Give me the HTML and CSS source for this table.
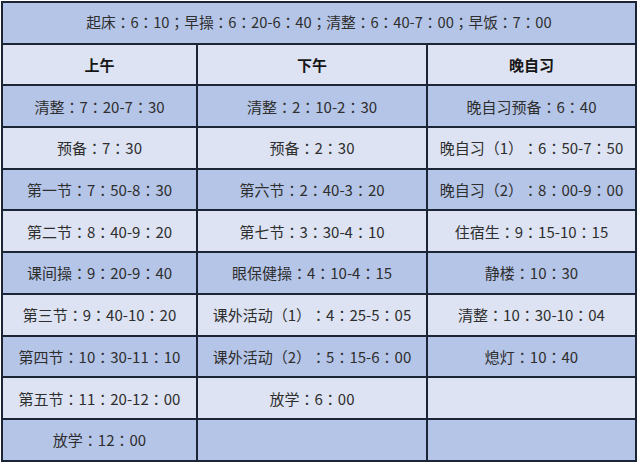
FILE: index.html
```html
<!DOCTYPE html>
<html lang="zh-CN">
<head>
<meta charset="utf-8">
<title>作息时间表</title>
<link rel="stylesheet" href="styles.css">
</head>
<body>
<div class="schedule" lang="zh-TW">
  <div class="cell title blue">起床：6：10；早操：6：20-6：40；清整：6：40-7：00；早饭：7：00</div>
  <div class="cell head light">上午</div>
  <div class="cell head light">下午</div>
  <div class="cell head light">晚自习</div>

  <div class="cell blue">清整：7：20-7：30</div>
  <div class="cell blue">清整：2：10-2：30</div>
  <div class="cell blue">晚自习预备：6：40</div>

  <div class="cell light">预备：7：30</div>
  <div class="cell light">预备：2：30</div>
  <div class="cell light">晚自习（1）：6：50-7：50</div>

  <div class="cell blue">第一节：7：50-8：30</div>
  <div class="cell blue">第六节：2：40-3：20</div>
  <div class="cell blue">晚自习（2）：8：00-9：00</div>

  <div class="cell light">第二节：8：40-9：20</div>
  <div class="cell light">第七节：3：30-4：10</div>
  <div class="cell light">住宿生：9：15-10：15</div>

  <div class="cell blue">课间操：9：20-9：40</div>
  <div class="cell blue">眼保健操：4：10-4：15</div>
  <div class="cell blue">静楼：10：30</div>

  <div class="cell light">第三节：9：40-10：20</div>
  <div class="cell light">课外活动（1）：4：25-5：05</div>
  <div class="cell light">清整：10：30-10：04</div>

  <div class="cell blue">第四节：10：30-11：10</div>
  <div class="cell blue">课外活动（2）：5：15-6：00</div>
  <div class="cell blue">熄灯：10：40</div>

  <div class="cell light">第五节：11：20-12：00</div>
  <div class="cell light">放学：6：00</div>
  <div class="cell light"></div>

  <div class="cell blue">放学：12：00</div>
  <div class="cell blue"></div>
  <div class="cell blue"></div>
</div>
</body>
</html>
```

FILE: styles.css
```css
html, body {
  margin: 0;
  padding: 0;
  background: #ffffff;
}

body {
  font-family: "Noto Sans CJK TC", "Noto Sans CJK SC", "Noto Sans", sans-serif;
  color: #2e2e2e;
}

.schedule {
  margin: 1px 0 0 1px;
  width: 636px;
  box-sizing: border-box;
  display: grid;
  grid-template-columns: 193px 228px 207px;
  grid-template-rows: repeat(11, 39.7px);
  gap: 2px;
  padding: 2px;
  background: #1b2536;
  text-spacing-trim: space-all;
}

.cell {
  display: flex;
  align-items: center;
  justify-content: center;
  font-size: 15px;
  line-height: 1;
  white-space: nowrap;
}

.title {
  grid-column: 1 / 4;
  font-size: 14.7px;
}

.head {
  font-weight: 700;
  color: #151515;
}

.blue {
  background: #b5c5e7;
}

.light {
  background: #dde3f2;
}
```
